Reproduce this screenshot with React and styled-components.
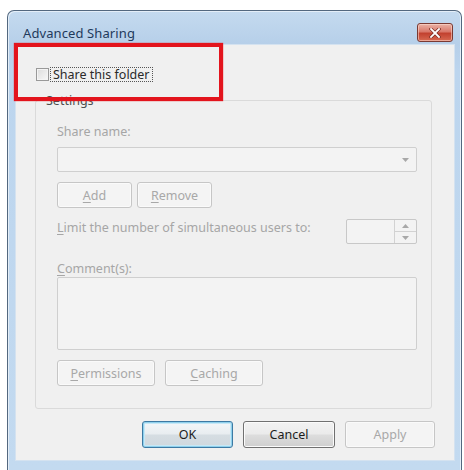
import React from "react";
import styled, { createGlobalStyle, css } from "styled-components";

const Global = createGlobalStyle`
  html, body { margin: 0; padding: 0; background: #ffffff; overflow: hidden; }
  body { font-family: "Noto Sans", "Open Sans", sans-serif; font-size: 12px; color: #222; }
  * { box-sizing: border-box; }
`;

const Window = styled.div`
  position: relative;
  width: 455px;
  margin: 10px 0 0 7px;
  padding: 0 6px 9px 7px;
  border: 1px solid #53687f;
  border-bottom: none;
  border-radius: 7px 7px 0 0;
  background: linear-gradient(180deg, #c4daef 0px, #b6cfe9 34px, #bcd5ee 60px, #c3daf0 100%);
  box-shadow: inset 1px 1px 0 #e4eef8, inset -1px 0 0 #e4eef8;
`;

const TitleBar = styled.div`
  height: 33px;
  display: flex;
  align-items: flex-start;
  justify-content: space-between;
  padding: 0 2px 0 8px;
`;

const Title = styled.span`
  margin-top: 14px;
  font-size: 13px;
  line-height: 16px;
  color: #1f3a5c;
  letter-spacing: 0.1px;
`;

const CloseButton = styled.div`
  margin-top: 12px;
  width: 36px;
  height: 19px;
  border: 1px solid #7a3a33;
  border-radius: 3px;
  background: linear-gradient(180deg, #eab3a6 0%, #d9786a 45%, #c2412f 55%, #d76a52 100%);
  box-shadow: inset 0 0 0 1px rgba(255, 220, 210, 0.55);
  display: flex;
  align-items: center;
  justify-content: center;
`;

const Content = styled.div`
  height: 417px;
  background: #f0f0f0;
  border: 1px solid #d4e2f0;
  display: flex;
  flex-direction: column;
`;

const CheckRow = styled.label`
  display: flex;
  align-items: center;
  margin: 22px 0 0 20px;
  height: 15px;
`;

const CheckBox = styled.span`
  width: 13px;
  height: 13px;
  border: 1px solid #999;
  background: linear-gradient(135deg, #dcdcdc, #f8f8f8);
  box-shadow: inset 0 0 0 1px #f4f4f4;
`;

const FocusText = styled.span`
  margin-left: 1px;
  padding: 0 2px;
  border: 1px dotted #555;
  line-height: 13px;
  font-size: 12.5px;
  color: #2a2a2a;
`;

const Group = styled.fieldset`
  margin: 11px 22px 0 19px;
  padding: 0 14px 0 9px;
  height: 316px;
  border: 1px solid #dadada;
  border-radius: 3px;
  min-width: 0;
`;

const Legend = styled.legend`
  padding: 0 1px;
  font-size: 12.5px;
  line-height: 15px;
  color: #4e4e4e;
`;

const GroupBody = styled.div`
  display: flex;
  flex-direction: column;
  padding-left: 12px;
`;

const Label = styled.div`
  font-size: 12.5px;
  line-height: 15px;
  color: #a6a6a6;
  margin-top: ${(p) => p.$mt || 0}px;
`;

const U = styled.span`
  text-decoration: underline;
  text-underline-offset: 2px;
`;

const Combo = styled.div`
  margin-top: 8px;
  height: 25px;
  border: 1px solid #cfcfcf;
  border-radius: 2px;
  background: #f3f3f3;
  display: flex;
  align-items: center;
  justify-content: flex-end;
  padding-right: 7px;
`;

const ButtonRow = styled.div`
  display: flex;
  gap: ${(p) => p.$gap || 5}px;
  margin-top: ${(p) => p.$mt || 0}px;
`;

const Button = styled.div`
  width: ${(p) => p.$w}px;
  height: ${(p) => p.$h || 26}px;
  border-radius: 3px;
  display: flex;
  align-items: center;
  justify-content: center;
  font-size: 12.5px;
  ${(p) =>
    p.$variant === "default"
      ? css`
          border: 1px solid #3d7aa3;
          color: #1c1c1c;
          background: linear-gradient(180deg, #f4f7f9 0%, #e8edf0 48%, #d5dde2 52%, #cfd8de 100%);
          box-shadow: inset 0 0 0 1px #8fd0ec, inset 0 0 0 2px #c7e8f6;
        `
      : p.$variant === "normal"
      ? css`
          border: 1px solid #707070;
          color: #1c1c1c;
          background: linear-gradient(180deg, #f2f2f2 0%, #ebebeb 48%, #dddddd 52%, #cfcfcf 100%);
          box-shadow: inset 0 0 0 1px #fbfbfb;
        `
      : css`
          border: 1px solid #c6c6c6;
          color: #a8a8a8;
          background: #f4f4f4;
          box-shadow: inset 0 0 0 1px #fafafa;
        `}
`;

const LimitRow = styled.div`
  margin-top: 11px;
  display: flex;
  align-items: flex-start;
  justify-content: space-between;
`;

const Spin = styled.div`
  width: 71px;
  height: 25px;
  border: 1px solid #c8c8c8;
  border-radius: 2px;
  background: #f3f3f3;
  display: flex;
  justify-content: flex-end;
`;

const SpinButtons = styled.div`
  width: 22px;
  border-left: 1px solid #d2d2d2;
  display: flex;
  flex-direction: column;
`;

const SpinHalf = styled.div`
  flex: 1;
  display: flex;
  align-items: center;
  justify-content: center;
  border-top: ${(p) => (p.$bottom ? "1px solid #d2d2d2" : "none")};
`;

const TextArea = styled.div`
  margin-top: 1px;
  height: 73px;
  border: 1px solid #cfcfcf;
  border-radius: 2px;
  background: #f3f3f3;
`;

const Footer = styled.div`
  display: flex;
  justify-content: flex-end;
  gap: 10px;
  margin-top: 12px;
  padding-right: 19px;
`;

const RedBox = styled.div`
  position: absolute;
  left: 6px;
  top: 32px;
  width: 209px;
  height: 58px;
  border: 4px solid #e3141d;
  box-shadow: 0 0 1px #e3141d;
  pointer-events: none;
`;

const Arrow = ({ up }) => (
  <svg width="7" height="4" viewBox="0 0 7 4">
    <path d={up ? "M0 4 L3.5 0 L7 4 Z" : "M0 0 L7 0 L3.5 4 Z"} fill="#a8a8a8" />
  </svg>
);

export default function App() {
  return (
    <>
      <Global />
      <Window>
        <TitleBar>
          <Title>Advanced Sharing</Title>
          <CloseButton>
            <svg width="12" height="10" viewBox="0 0 12 10">
              <path d="M2 1 L10 9 M10 1 L2 9" stroke="#7a2a20" strokeWidth="3.2" strokeLinecap="square" />
              <path d="M2 1 L10 9 M10 1 L2 9" stroke="#ffffff" strokeWidth="1.8" strokeLinecap="square" />
            </svg>
          </CloseButton>
        </TitleBar>
        <Content>
          <CheckRow>
            <CheckBox />
            <FocusText>Share this folder</FocusText>
          </CheckRow>
          <Group>
            <Legend>Settings</Legend>
            <GroupBody>
              <Label $mt={16}>Share name:</Label>
              <Combo>
                <Arrow />
              </Combo>
              <ButtonRow $mt={10} $gap={5}>
                <Button $w={75}>
                  <U>A</U>dd
                </Button>
                <Button $w={75}>
                  <U>R</U>emove
                </Button>
              </ButtonRow>
              <LimitRow>
                <Label $mt={1}>
                  <U>L</U>imit the number of simultaneous users to:
                </Label>
                <Spin>
                  <SpinButtons>
                    <SpinHalf>
                      <Arrow up />
                    </SpinHalf>
                    <SpinHalf $bottom>
                      <Arrow />
                    </SpinHalf>
                  </SpinButtons>
                </Spin>
              </LimitRow>
              <Label $mt={17}>
                <U>C</U>omment(s):
              </Label>
              <TextArea />
              <ButtonRow $mt={10} $gap={10}>
                <Button $w={98}>
                  <U>P</U>ermissions
                </Button>
                <Button $w={98}>
                  <U>C</U>aching
                </Button>
              </ButtonRow>
            </GroupBody>
          </Group>
          <Footer>
            <Button $w={91} $h={27} $variant="default">OK</Button>
            <Button $w={92} $h={27} $variant="normal">Cancel</Button>
            <Button $w={90} $h={27}>Apply</Button>
          </Footer>
        </Content>
        <RedBox />
      </Window>
    </>
  );
}
